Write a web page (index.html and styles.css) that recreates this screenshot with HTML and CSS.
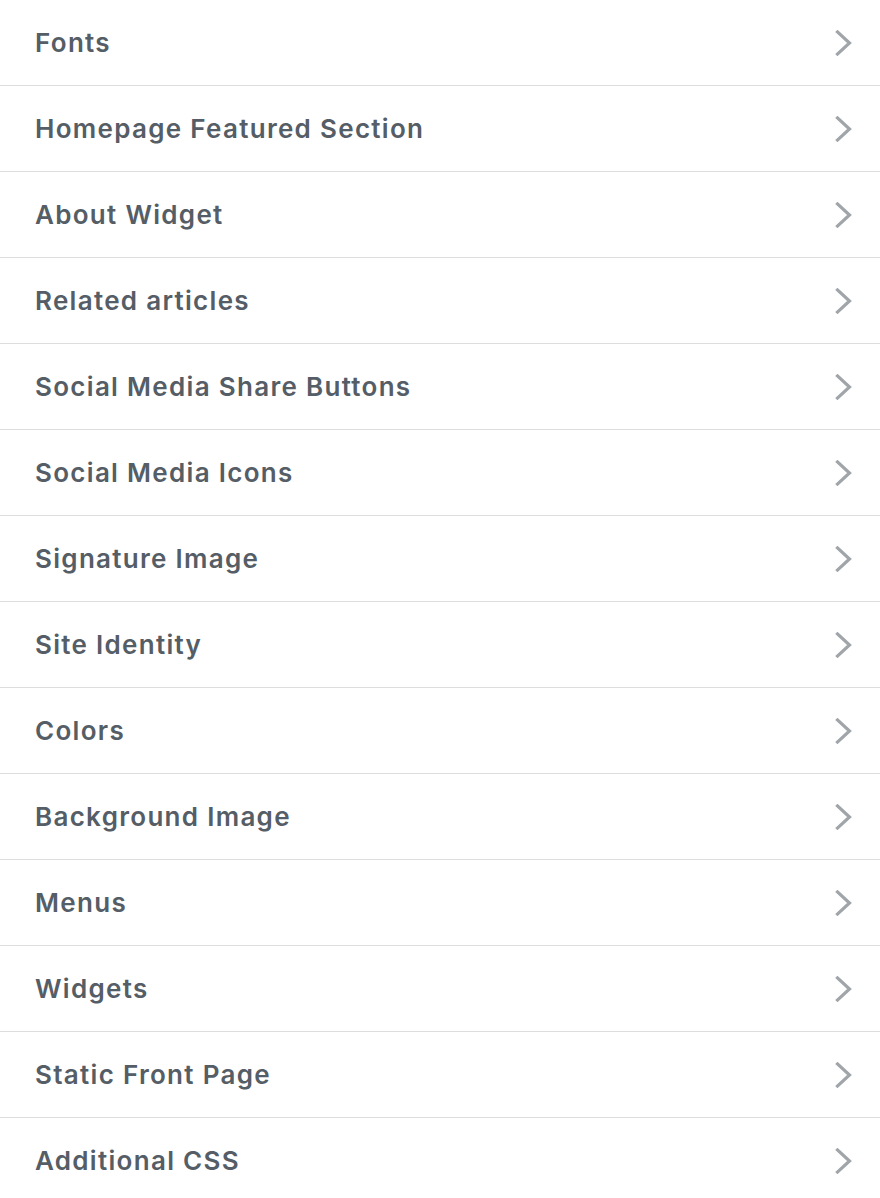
FILE: index.html
```html
<!DOCTYPE html>
<html>
<head>
<meta charset="utf-8">
<link rel="stylesheet" href="styles.css">
</head>
<body>
<ul class="sections">
  <li class="section"><span class="title">Fonts</span><svg class="chev" viewBox="0 0 18 26" width="18" height="26"><polyline points="2.5,2 14.5,13 2.5,24"/></svg></li>
  <li class="section"><span class="title">Homepage Featured Section</span><svg class="chev" viewBox="0 0 18 26" width="18" height="26"><polyline points="2.5,2 14.5,13 2.5,24"/></svg></li>
  <li class="section"><span class="title">About Widget</span><svg class="chev" viewBox="0 0 18 26" width="18" height="26"><polyline points="2.5,2 14.5,13 2.5,24"/></svg></li>
  <li class="section"><span class="title">Related articles</span><svg class="chev" viewBox="0 0 18 26" width="18" height="26"><polyline points="2.5,2 14.5,13 2.5,24"/></svg></li>
  <li class="section"><span class="title">Social Media Share Buttons</span><svg class="chev" viewBox="0 0 18 26" width="18" height="26"><polyline points="2.5,2 14.5,13 2.5,24"/></svg></li>
  <li class="section"><span class="title">Social Media Icons</span><svg class="chev" viewBox="0 0 18 26" width="18" height="26"><polyline points="2.5,2 14.5,13 2.5,24"/></svg></li>
  <li class="section"><span class="title">Signature Image</span><svg class="chev" viewBox="0 0 18 26" width="18" height="26"><polyline points="2.5,2 14.5,13 2.5,24"/></svg></li>
  <li class="section"><span class="title">Site Identity</span><svg class="chev" viewBox="0 0 18 26" width="18" height="26"><polyline points="2.5,2 14.5,13 2.5,24"/></svg></li>
  <li class="section"><span class="title">Colors</span><svg class="chev" viewBox="0 0 18 26" width="18" height="26"><polyline points="2.5,2 14.5,13 2.5,24"/></svg></li>
  <li class="section"><span class="title">Background Image</span><svg class="chev" viewBox="0 0 18 26" width="18" height="26"><polyline points="2.5,2 14.5,13 2.5,24"/></svg></li>
  <li class="section"><span class="title">Menus</span><svg class="chev" viewBox="0 0 18 26" width="18" height="26"><polyline points="2.5,2 14.5,13 2.5,24"/></svg></li>
  <li class="section"><span class="title">Widgets</span><svg class="chev" viewBox="0 0 18 26" width="18" height="26"><polyline points="2.5,2 14.5,13 2.5,24"/></svg></li>
  <li class="section"><span class="title">Static Front Page</span><svg class="chev" viewBox="0 0 18 26" width="18" height="26"><polyline points="2.5,2 14.5,13 2.5,24"/></svg></li>
  <li class="section"><span class="title">Additional CSS</span><svg class="chev" viewBox="0 0 18 26" width="18" height="26"><polyline points="2.5,2 14.5,13 2.5,24"/></svg></li>
</ul>
</body>
</html>
```
FILE: styles.css
```css
html, body {
  margin: 0;
  padding: 0;
  background: #ffffff;
}
.sections {
  list-style: none;
  margin: 0;
  padding: 0;
}
.section {
  display: flex;
  align-items: center;
  justify-content: space-between;
  height: 85px;
  padding: 0 27px 0 35px;
  border-bottom: 1px solid #dddddd;
}
.title {
  font-family: Inter, "Liberation Sans", sans-serif;
  font-weight: 600;
  font-size: 26px;
  letter-spacing: 1.3px;
  color: #555d66;
}
.chev {
  display: block;
}
.chev polyline {
  fill: none;
  stroke: #a0a5aa;
  stroke-width: 3.2;
  stroke-linecap: square;
  stroke-linejoin: miter;
}
```
